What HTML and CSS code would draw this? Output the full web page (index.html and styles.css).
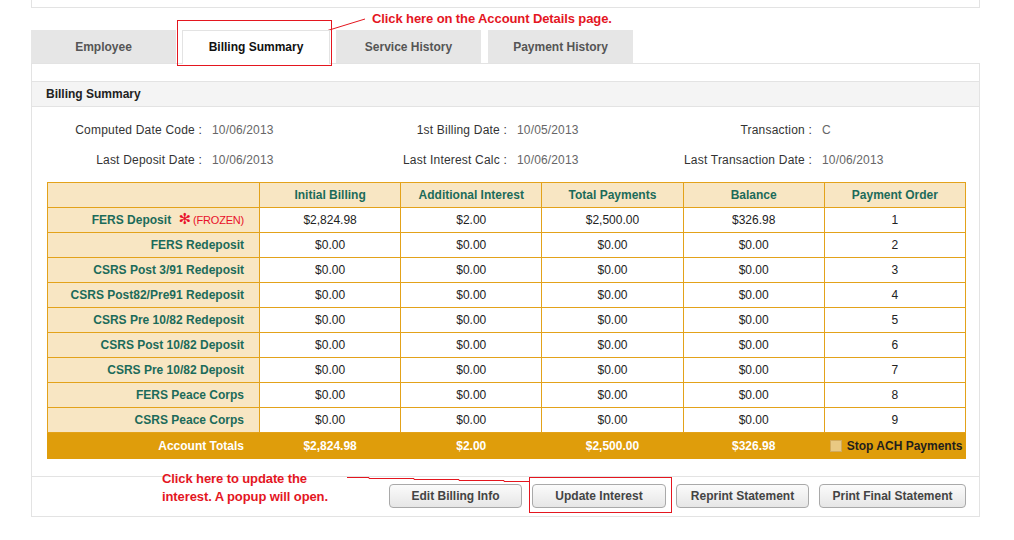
FILE: index.html
```html
<!DOCTYPE html>
<html>
<head>
<meta charset="utf-8">
<link rel="stylesheet" href="styles.css">
</head>
<body>
<div class="page">
  <div class="container">
    <div class="topbox"></div>
    <div class="tabs">
      <div class="tab">Employee</div>
      <div class="tab active">Billing Summary</div>
      <div class="tab">Service History</div>
      <div class="tab">Payment History</div>
    </div>
    <div class="panel">
      <div class="panel-head">Billing Summary</div>
      <div class="info">
        <div class="info-item"><span class="lbl">Computed Date Code :</span><span class="val">10/06/2013</span></div>
        <div class="info-item"><span class="lbl">1st Billing Date :</span><span class="val">10/05/2013</span></div>
        <div class="info-item"><span class="lbl">Transaction :</span><span class="val">C</span></div>
        <div class="info-item"><span class="lbl">Last Deposit Date :</span><span class="val">10/06/2013</span></div>
        <div class="info-item"><span class="lbl">Last Interest Calc :</span><span class="val">10/06/2013</span></div>
        <div class="info-item"><span class="lbl">Last Transaction Date :</span><span class="val">10/06/2013</span></div>
      </div>
      <table class="bill">
        <colgroup>
          <col class="c-first"><col><col><col><col><col>
        </colgroup>
        <thead>
          <tr><th></th><th>Initial Billing</th><th>Additional Interest</th><th>Total Payments</th><th>Balance</th><th>Payment Order</th></tr>
        </thead>
        <tbody>
          <tr><td class="rl">FERS Deposit <span class="frz-icon">✻</span><span class="frz">(FROZEN)</span></td><td>$2,824.98</td><td>$2.00</td><td>$2,500.00</td><td>$326.98</td><td>1</td></tr>
          <tr><td class="rl">FERS Redeposit</td><td>$0.00</td><td>$0.00</td><td>$0.00</td><td>$0.00</td><td>2</td></tr>
          <tr><td class="rl">CSRS Post 3/91 Redeposit</td><td>$0.00</td><td>$0.00</td><td>$0.00</td><td>$0.00</td><td>3</td></tr>
          <tr><td class="rl">CSRS Post82/Pre91 Redeposit</td><td>$0.00</td><td>$0.00</td><td>$0.00</td><td>$0.00</td><td>4</td></tr>
          <tr><td class="rl">CSRS Pre 10/82 Redeposit</td><td>$0.00</td><td>$0.00</td><td>$0.00</td><td>$0.00</td><td>5</td></tr>
          <tr><td class="rl">CSRS Post 10/82 Deposit</td><td>$0.00</td><td>$0.00</td><td>$0.00</td><td>$0.00</td><td>6</td></tr>
          <tr><td class="rl">CSRS Pre 10/82 Deposit</td><td>$0.00</td><td>$0.00</td><td>$0.00</td><td>$0.00</td><td>7</td></tr>
          <tr><td class="rl">FERS Peace Corps</td><td>$0.00</td><td>$0.00</td><td>$0.00</td><td>$0.00</td><td>8</td></tr>
          <tr><td class="rl">CSRS Peace Corps</td><td>$0.00</td><td>$0.00</td><td>$0.00</td><td>$0.00</td><td>9</td></tr>
        </tbody>
        <tfoot>
          <tr><td class="rl">Account Totals</td><td>$2,824.98</td><td>$2.00</td><td>$2,500.00</td><td>$326.98</td><td class="ach"><span class="chk"></span>Stop ACH Payments</td></tr>
        </tfoot>
      </table>
      <div class="footer">
        <button class="btn w133">Edit Billing Info</button>
        <button class="btn w134">Update Interest</button>
        <button class="btn w133">Reprint Statement</button>
        <button class="btn w147">Print Final Statement</button>
      </div>
    </div>
  </div>

  <div class="note-box note-box-top"></div>
  <svg class="note-line note-line-top" width="90" height="30" viewBox="0 0 90 30"><line x1="2" y1="26" x2="80" y2="2" stroke="#e4161f" stroke-width="1"/></svg>
  <div class="note note-top">Click here on the Account Details page.</div>

  <div class="note note-bottom">Click here to update the<br>interest. A popup will open.</div>
  <svg class="note-line note-line-bottom" width="185" height="8" viewBox="0 0 185 8"><polyline points="0,1.5 22,1.5 22,2.5 67,2.5 67,3.5 112,3.5 112,4.5 157,4.5 157,5.5 183,5.5" fill="none" stroke="#e4161f" stroke-width="1"/></svg>
  <div class="note-box note-box-bottom"></div>
</div>
</body>
</html>
```
FILE: styles.css
```css
* { box-sizing: border-box; }
body {
  margin: 0;
  font-family: "Liberation Sans", Arial, sans-serif;
  font-size: 12px;
  color: #333;
  background: #fff;
}
.page {
  position: relative;
  width: 1014px;
  height: 540px;
}
.container {
  margin-left: 31px;
  width: 949px;
}
.topbox {
  height: 8px;
  border: 1px solid #e3e3e3;
  border-top: none;
}
.tabs {
  display: flex;
  gap: 6px;
  margin-top: 22px;
  align-items: flex-end;
}
.tab {
  height: 33px;
  width: 145px;
  background: #e6e6e6;
  color: #555;
  font-weight: bold;
  display: flex;
  align-items: center;
  justify-content: center;
}
.tab:nth-child(2) { width: 148px; }
.tab:nth-child(3) { width: 145px; }
.tab:nth-child(4) { width: 145px; margin-left: 1px; }
.tab.active {
  background: #fff;
  color: #111;
  border: 1px solid #e3e3e3;
  border-bottom: none;
  height: 34px;
  margin-bottom: -1px;
  padding-bottom: 2px;
  position: relative;
  z-index: 1;
}
.panel {
  border: 1px solid #e3e3e3;
  height: 454px;
}
.panel-head {
  margin-top: 17px;
  height: 26px;
  background: #f4f4f4;
  border-top: 1px solid #e3e3e3;
  border-bottom: 1px solid #e3e3e3;
  padding-left: 14px;
  font-weight: bold;
  color: #222;
  display: flex;
  align-items: center;
}
.info {
  display: grid;
  grid-template-columns: 305px 305px 305px;
  padding: 8px 0 7px 14px;
}
.info-item {
  display: flex;
  align-items: center;
  height: 30px;
}
.lbl {
  width: 156px;
  text-align: right;
  color: #333;
  white-space: nowrap;
  letter-spacing: 0.2px;
}
.val {
  margin-left: 10px;
  color: #666;
  letter-spacing: 0.15px;
}
.bill {
  margin-left: 15px;
  width: 919px;
  border-collapse: collapse;
  table-layout: fixed;
}
.c-first { width: 212px; }
.bill th, .bill td {
  border: 1px solid #e3a21a;
  height: 25px;
  padding: 0;
  text-align: center;
  white-space: nowrap;
}
.bill th {
  background: #f8e6c3;
  color: #1c6b5a;
  font-weight: bold;
}
.bill td {
  color: #222;
  background: #fff;
}
.bill td.rl {
  background: #f8e6c3;
  color: #1c6b5a;
  font-weight: bold;
  text-align: right;
  padding-right: 15px;
}
.frz-icon {
  color: #e8102a;
  font-family: "DejaVu Sans", sans-serif;
  font-weight: bold;
  font-size: 15px;
  line-height: 10px;
  margin-left: 4px;
}
.frz {
  color: #e8102a;
  font-weight: normal;
  font-size: 11px;
  letter-spacing: -0.2px;
  margin-left: 2px;
}
.bill tfoot td, .bill tfoot td.rl {
  background: #df9d0b;
  color: #fff;
  font-weight: bold;
  height: 26px;
  border-color: #df9d0b;
}
.bill tfoot td.ach {
  color: #1e1e1e;
  text-align: left;
  padding-left: 5px;
}
.chk {
  display: inline-block;
  width: 12px;
  height: 12px;
  background: #e9c983;
  border: 1px solid #d2ab5e;
  vertical-align: -2px;
  margin-right: 5px;
}
.footer {
  margin-top: 17px;
  border-top: 1px solid #e3e3e3;
  display: flex;
  justify-content: flex-end;
  gap: 10px;
  padding: 7px 13px 7px 0;
}
.btn {
  height: 24px;
  border: 1px solid #a9a9a9;
  border-radius: 4px;
  background: linear-gradient(#fbfbfb, #e6e6e6);
  font-family: "Liberation Sans", Arial, sans-serif;
  font-size: 12px;
  font-weight: bold;
  color: #444;
  padding: 0;
}
.w133 { width: 133px; }
.w134 { width: 134px; }
.w147 { width: 147px; }

.note {
  position: absolute;
  color: #e4161f;
  font-family: "Liberation Sans", Arial, sans-serif;
  font-weight: bold;
  font-size: 13px;
  letter-spacing: -0.1px;
  line-height: 18px;
  white-space: nowrap;
}
.note-top { left: 372px; top: 10px; }
.note-bottom { left: 162px; top: 470px; }
.note-box {
  position: absolute;
  border: 1px solid #e4161f;
}
.note-box-top { left: 177px; top: 20px; width: 155px; height: 46px; }
.note-box-bottom { left: 529px; top: 477px; width: 143px; height: 36px; }
.note-line { position: absolute; }
.note-line-top { left: 285px; top: 17px; }
.note-line-bottom { left: 347px; top: 476px; }
```
